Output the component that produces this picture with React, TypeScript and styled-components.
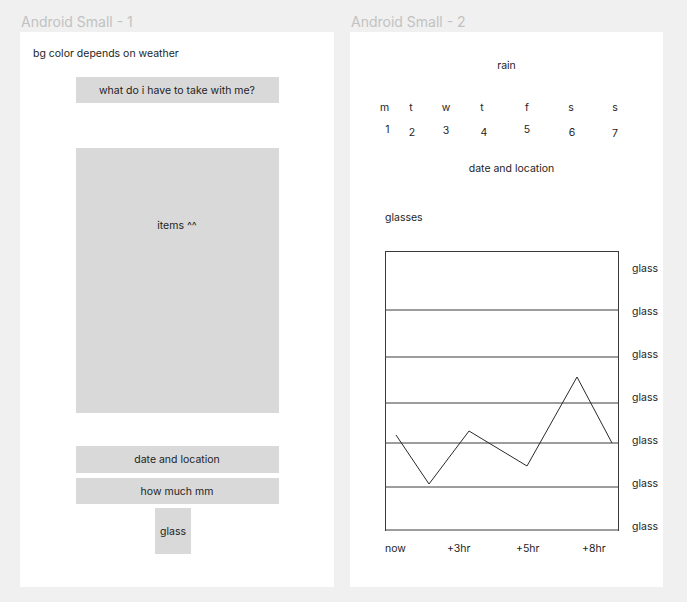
import React from "react";
import styled, { createGlobalStyle } from "styled-components";

const Global = createGlobalStyle`
  html, body { margin: 0; padding: 0; background: #f0f0f0; }
  body { font-family: Inter, "Noto Sans", sans-serif; color: #1e1e1e; }
`;

const Canvas = styled.div`
  display: flex;
  gap: 16px;
  padding: 0 0 0 20px;
  width: 687px;
  height: 602px;
  box-sizing: border-box;
  background: #f0f0f0;
`;

const Column = styled.div`
  display: flex;
  flex-direction: column;
`;

const FrameTitle = styled.div`
  height: 32px;
  box-sizing: border-box;
  padding: 13px 0 0 1px;
  font-size: 14px;
  line-height: 17px;
  color: #c2c2c2;
`;

const Frame = styled.div<{ $w: number }>`
  width: ${(p) => p.$w}px;
  height: 555px;
  background: #fff;
  display: flex;
  flex-direction: column;
  box-sizing: border-box;
`;

const Note = styled.div`
  font-size: 10.5px;
  line-height: 13px;
  margin: 15px 0 0 13px;
`;

const GrayBox = styled.div<{ $w: number; $h: number; $top: number; $shift?: number }>`
  align-self: center;
  width: ${(p) => p.$w}px;
  height: ${(p) => p.$h}px;
  margin-top: ${(p) => p.$top}px;
  margin-right: ${(p) => (p.$shift ?? 0) * 2}px;
  background: #d9d9d9;
  display: flex;
  align-items: center;
  justify-content: center;
  font-size: 10.5px;
  line-height: 13px;
`;

const ItemsBox = styled(GrayBox)`
  align-items: flex-start;
  padding-top: 71px;
  box-sizing: border-box;
`;

const CenterText = styled.div<{ $top: number; $dx?: number }>`
  text-align: center;
  font-size: 10.5px;
  line-height: 13px;
  margin-top: ${(p) => p.$top}px;
  padding-left: ${(p) => (p.$dx ?? 0) * 2}px;
`;

const Week = styled.div`
  display: grid;
  grid-template-columns: 23px 30px 40px 32px 58px 30px 58px;
  margin: 29px 0 0 23px;
  width: 271px;
`;

const DayCell = styled.div`
  display: flex;
  flex-direction: column;
  align-items: center;
  font-size: 10.5px;
  line-height: 13px;
`;

const DayNum = styled.span<{ $dy: number; $dx: number }>`
  margin-top: ${(p) => 9 + p.$dy}px;
  margin-left: ${(p) => p.$dx * 2}px;
`;

const Label = styled.div`
  font-size: 10.5px;
  line-height: 13px;
  margin: 36px 0 0 35px;
`;

const ChartRow = styled.div`
  display: flex;
  margin: 27px 0 0 35px;
  gap: 13px;
`;

const ChartArea = styled.div`
  display: flex;
  flex-direction: column;
`;

const YLabels = styled.div`
  display: flex;
  flex-direction: column;
  justify-content: space-between;
  padding: 11px 0 0;
  height: 282px;
  box-sizing: border-box;
  font-size: 10.5px;
  line-height: 13px;
`;

const XLabels = styled.div`
  display: grid;
  grid-template-columns: 62px 69px 66px auto;
  margin-top: 11px;
  font-size: 10.5px;
  line-height: 13px;
`;

const days = [
  { d: "m", n: "1", dy: 0, dx: 3 },
  { d: "t", n: "2", dy: 3, dx: 1 },
  { d: "w", n: "3", dy: 1, dx: 0 },
  { d: "t", n: "4", dy: 3, dx: 2 },
  { d: "f", n: "5", dy: 0, dx: 0 },
  { d: "s", n: "6", dy: 3, dx: 1 },
  { d: "s", n: "7", dy: 4, dx: 0 },
];

const gridYs = [0.5, 59, 106, 152, 192, 236, 279];

export default function App() {
  return (
    <>
      <Global />
      <Canvas>
        <Column>
          <FrameTitle>Android Small - 1</FrameTitle>
          <Frame $w={314}>
            <Note>bg color depends on weather</Note>
            <GrayBox $w={203} $h={26} $top={17}>what do i have to take with me?</GrayBox>
            <ItemsBox $w={203} $h={265} $top={45}>items ^^</ItemsBox>
            <GrayBox $w={203} $h={27} $top={33}>date and location</GrayBox>
            <GrayBox $w={203} $h={26} $top={5}>how much mm</GrayBox>
            <GrayBox $w={36} $h={46} $top={4} $shift={4}>glass</GrayBox>
          </Frame>
        </Column>
        <Column>
          <FrameTitle>Android Small - 2</FrameTitle>
          <Frame $w={313}>
            <CenterText $top={27}>rain</CenterText>
            <Week>
              {days.map((x, i) => (
                <DayCell key={i}>
                  <span>{x.d}</span>
                  <DayNum $dy={x.dy} $dx={x.dx}>{x.n}</DayNum>
                </DayCell>
              ))}
            </Week>
            <CenterText $top={22} $dx={5}>date and location</CenterText>
            <Label>glasses</Label>
            <ChartRow>
              <ChartArea>
                <svg width="234" height="280" viewBox="0 0 234 280">
                  {gridYs.map((y, i) => (
                    <line key={i} x1="0" x2="234" y1={y} y2={y} stroke="#3a3a3a" strokeWidth="1" />
                  ))}
                  <line x1="0.5" x2="0.5" y1="0" y2="280" stroke="#3a3a3a" strokeWidth="1" />
                  <line x1="233.5" x2="233.5" y1="0" y2="280" stroke="#3a3a3a" strokeWidth="1" />
                  <polyline
                    points="11,184 44,233 84,180 142,215 192,126 227,192"
                    fill="none"
                    stroke="#2a2a2a"
                    strokeWidth="1"
                  />
                </svg>
                <XLabels>
                  <span>now</span>
                  <span>+3hr</span>
                  <span>+5hr</span>
                  <span>+8hr</span>
                </XLabels>
              </ChartArea>
              <YLabels>
                {Array.from({ length: 7 }).map((_, i) => (
                  <span key={i}>glass</span>
                ))}
              </YLabels>
            </ChartRow>
          </Frame>
        </Column>
      </Canvas>
    </>
  );
}
